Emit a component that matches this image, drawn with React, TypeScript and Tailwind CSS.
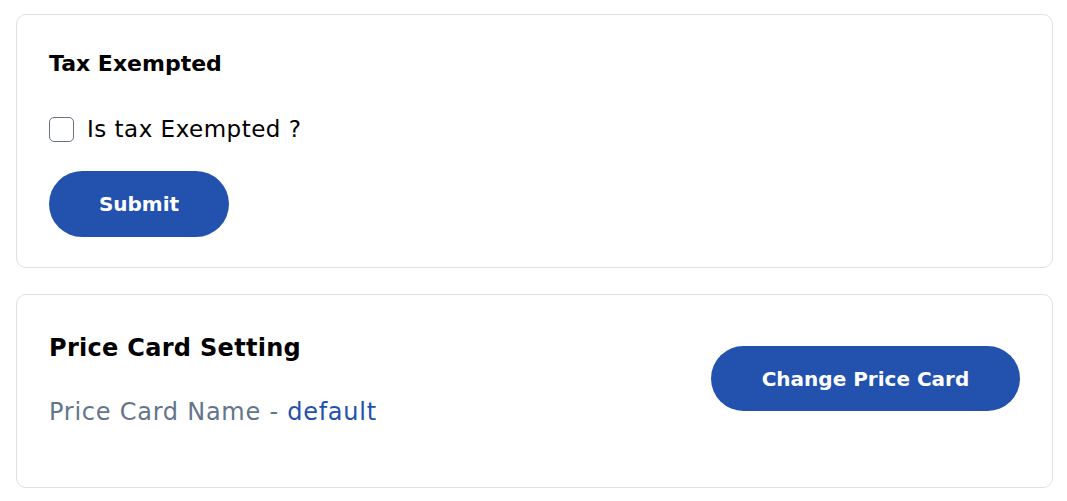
export default function App() {
  return (
    <main
      className="min-h-[501px] bg-white px-4 pt-[14px] text-black"
      style={{ fontFamily: '"DejaVu Sans", "Open Sans", sans-serif' }}
    >
      <section className="w-[1037px] rounded-[10px] border border-[#e0e0e0] bg-white px-8 pt-[34px] pb-[30px]">
        <h2 className="text-[22px] font-bold leading-[30px]">Tax Exempted</h2>
        <label className="mt-[35px] flex items-center gap-[13px]">
          <span className="h-[25px] w-[25px] rounded-[5px] border border-[#6b7280] bg-white" />
          <span className="text-[23px] leading-[30px] tracking-[0.5px]">Is tax Exempted ?</span>
        </label>
        <button className="mt-[27px] h-[66px] w-[180px] rounded-full bg-[#2251ae] text-[20px] font-bold text-white">
          Submit
        </button>
      </section>

      <section className="mt-[26px] flex h-[194px] w-[1037px] items-start justify-between rounded-[10px] border border-[#e0e0e0] bg-white px-8 pt-[34px]">
        <div>
          <h2 className="text-[24px] font-bold leading-[38px] tracking-[0.3px]">Price Card Setting</h2>
          <p className="mt-[30px] text-[24px] leading-[30px] tracking-[0.75px] text-[#64748b]">
            Price Card Name - <span className="text-[#2251ae]">default</span>
          </p>
        </div>
        <button className="mt-[17px] h-[65px] w-[309px] rounded-full bg-[#2251ae] text-[20px] font-bold text-white">
          Change Price Card
        </button>
      </section>
    </main>
  )
}
